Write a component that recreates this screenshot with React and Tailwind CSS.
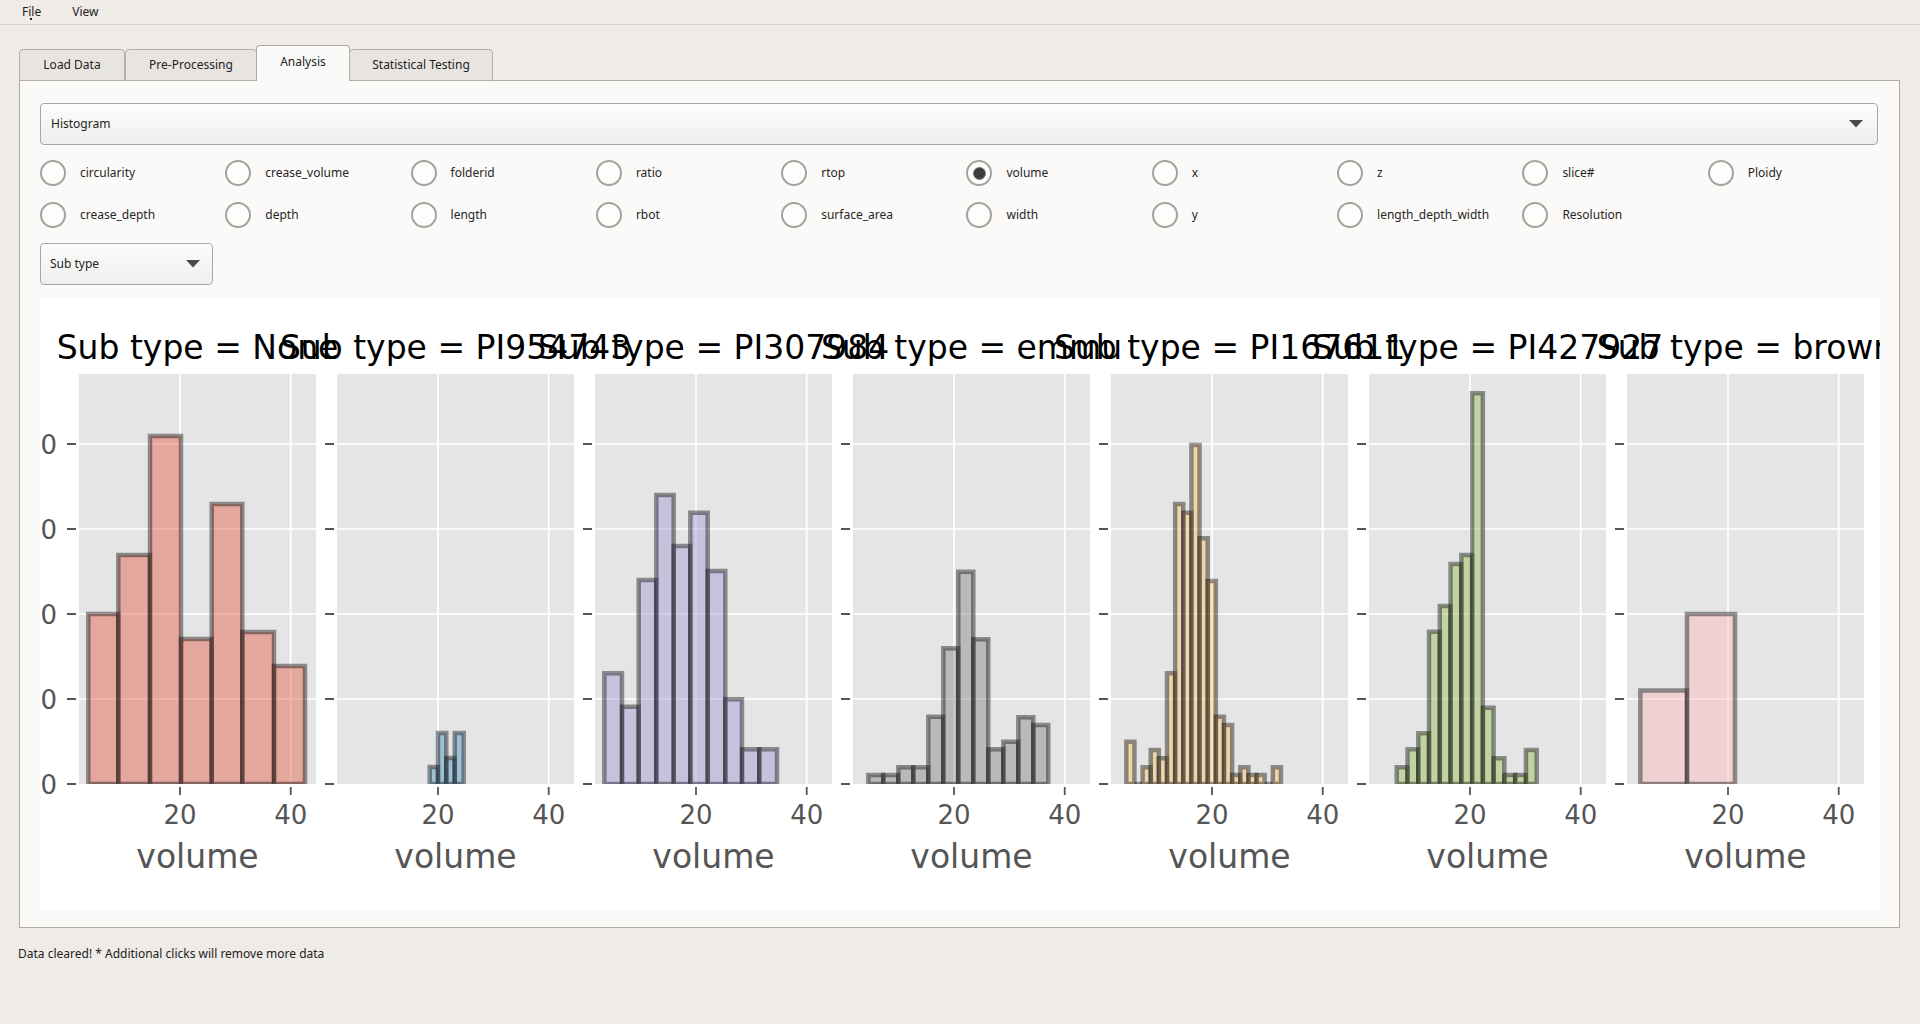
import React from "react";

// figure geometry, in px relative to the white canvas
const BASE = 486;
const PLOT_TOP = 76;
const PLOT_H = 410;
const PLOT_W = 237;
const GRID_Y = [401, 316, 231, 146];
const X_TICKS = [
  { x: 101, label: "20" },
  { x: 211.7, label: "40" },
];

const uniform = (start, width, heights) => ({
  edges: heights.map((_, i) => start + i * width).concat(start + heights.length * width),
  heights,
});

const plots = [
  {
    title: "Sub type = None",
    color: "#E24A33",
    edges: [9.3, 39.3, 71, 102, 132.7, 163.3, 195, 226],
    heights: [170, 229, 348, 145, 280, 152, 118],
  },
  {
    title: "Sub type = PI954743",
    color: "#348ABD",
    edges: [92.7, 101, 109.3, 117.7, 126.7],
    heights: [17, 51, 26, 51],
  },
  {
    title: "Sub type = PI307984",
    color: "#988ED5",
    edges: [9.3, 27, 43.7, 61.3, 78.7, 95.3, 112.7, 130.3, 147, 164.3, 182],
    heights: [110.7, 77.3, 204, 289, 238, 271.3, 213, 84.7, 34.7, 34.7],
  },
  {
    title: "Sub type = emmu",
    color: "#777777",
    ...uniform(15.3, 15, [9, 9, 16.7, 16.7, 67.3, 135.7, 212.3, 144.7, 34.7, 42.3, 66.7, 59]),
  },
  {
    title: "Sub type = PI167611",
    color: "#FBC15E",
    ...uniform(15.3, 8.14, [42.3, 0, 16.7, 34, 25.7, 110.7, 280, 271.3, 339, 245.7, 203, 67.3, 59, 9, 16.7, 9, 9, 0, 16.7]),
  },
  {
    title: "Sub type = PI427927",
    color: "#8EBA42",
    ...uniform(27.7, 10.77, [16.7, 34.7, 50.7, 152.3, 178, 220, 229, 390.7, 76.3, 25.7, 9, 9, 34]),
  },
  {
    title: "Sub type = brown",
    color: "#FFB5B8",
    edges: [13.3, 60, 108],
    heights: [93.5, 170],
  },
];

const row1 = ["circularity", "crease_volume", "folderid", "ratio", "rtop", "volume", "x", "z", "slice#", "Ploidy"];
const row2 = ["crease_depth", "depth", "length", "rbot", "surface_area", "width", "y", "length_depth_width", "Resolution"];

const Arrow = () => (
  <svg width="14" height="8" viewBox="0 0 14 8">
    <polygon points="0,0 14,0 7,7.5" fill="#4a4a4a" />
  </svg>
);

const Radio = ({ label, checked }) => (
  <div className="flex items-center h-[42px]">
    <span className="w-[26px] h-[26px] rounded-full border-2 border-[#a5a19c] bg-[#fdfdfc] flex items-center justify-center shrink-0">
      {checked && <span className="w-[13px] h-[13px] rounded-full bg-[#3d3d3d] border border-[#777]" />}
    </span>
    <span className="ml-[14px] text-[12px] text-[#262626]">{label}</span>
  </div>
);

const Subplot = ({ plot, index }) => {
  const left = 39 + 258 * index;
  const id = `clip${index}`;
  return (
    <g transform={`translate(${left},0)`}>
      <text x={PLOT_W / 2} y={61} textAnchor="middle" fontSize="33" fill="#000">
        {plot.title}
      </text>
      <defs>
        <clipPath id={id}>
          <rect x="0" y={PLOT_TOP} width={PLOT_W} height={PLOT_H} />
        </clipPath>
      </defs>
      <rect x="0" y={PLOT_TOP} width={PLOT_W} height={PLOT_H} fill="#e5e5e5" />
      {GRID_Y.map((y) => (
        <line key={y} x1="0" x2={PLOT_W} y1={y} y2={y} stroke="#fff" strokeWidth="1.7" />
      ))}
      {X_TICKS.map((t) => (
        <line key={t.x} x1={t.x} x2={t.x} y1={PLOT_TOP} y2={BASE} stroke="#fff" strokeWidth="1.7" />
      ))}
      <g clipPath={`url(#${id})`}>
        {plot.heights.map((h, i) => {
          const x0 = plot.edges[i];
          const x1 = plot.edges[i + 1];
          return (
            <path
              key={i}
              d={`M${x0} ${BASE} V${BASE - h} H${x1} V${BASE} Z`}
              fill={plot.color}
              fillOpacity="0.4"
              stroke="#000"
              strokeOpacity="0.4"
              strokeWidth="4.5"
            />
          );
        })}
      </g>
      {[BASE, ...GRID_Y].map((y) => (
        <line key={y} x1="-12" x2="-3" y1={y} y2={y} stroke="#555" strokeWidth="2" />
      ))}
      {index === 0 &&
        [BASE, ...GRID_Y].map((y) => (
          <text key={y} x="-22" y={y + 9.5} textAnchor="end" fontSize="26" fill="#555">
            0
          </text>
        ))}
      {X_TICKS.map((t) => (
        <g key={t.label}>
          <line x1={t.x} x2={t.x} y1={BASE + 3} y2={BASE + 11} stroke="#555" strokeWidth="1.8" />
          <text x={t.x} y="526" textAnchor="middle" fontSize="26" fill="#555">
            {t.label}
          </text>
        </g>
      ))}
      <text x={PLOT_W / 2} y="570" textAnchor="middle" fontSize="33" fill="#555">
        volume
      </text>
    </g>
  );
};

const tabs = [
  { label: "Load Data", w: "w-[106px]" },
  { label: "Pre-Processing", w: "w-[132px]" },
  { label: "Analysis", w: "w-[94px]", active: true },
  { label: "Statistical Testing", w: "w-[144px]" },
];

export default function App() {
  return (
    <div
      className="w-[1920px] h-[1024px] bg-[#efebe7] text-[#232323] overflow-hidden"
      style={{ fontFamily: "'Noto Sans', 'Open Sans', sans-serif" }}
    >
      {/* menu bar */}
      <div className="h-[25px] border-b border-[#d9d5d0] flex items-center text-[12px]">
        <span className="ml-[22px] relative">
          File
          <span className="absolute left-[8px] top-[15px] w-[2px] h-[2px] bg-[#222]" />
        </span>
        <span className="ml-[31px]">View</span>
      </div>

      {/* tabs */}
      <div className="flex items-end pl-[19px] pt-[20px] -mb-px relative z-10 text-[12px]">
        {tabs.map((t) =>
          t.active ? (
            <div
              key={t.label}
              className={`${t.w} h-[36px] pb-[4px] flex items-center justify-center bg-[#fcfaf8] border border-b-0 border-[#aeaaa4] rounded-t-[4px] -mx-px`}
            >
              {t.label}
            </div>
          ) : (
            <div
              key={t.label}
              className={`${t.w} h-[32px] flex items-center justify-center bg-[#e8e5e1] border border-[#b3afa9] rounded-t-[4px]`}
            >
              {t.label}
            </div>
          )
        )}
      </div>

      {/* pane */}
      <div className="ml-[19px] w-[1881px] h-[848px] bg-[#fcfaf8] border border-[#aeaaa4] pl-[20px] pt-[22px]">
        <div className="w-[1838px] h-[42px] rounded-[4px] border border-[#aaa6a1] bg-gradient-to-b from-[#fdfdfd] to-[#efeeec] flex items-center justify-between pl-[10px] pr-[14px] text-[12px]">
          <span>Histogram</span>
          <Arrow />
        </div>

        <div className="mt-[7px] grid grid-cols-[repeat(10,185.3px)]">
          {row1.map((l) => (
            <Radio key={l} label={l} checked={l === "volume"} />
          ))}
          {row2.map((l) => (
            <Radio key={l} label={l} />
          ))}
        </div>

        <div className="mt-[7px] w-[173px] h-[42px] rounded-[4px] border border-[#aaa6a1] bg-gradient-to-b from-[#fdfdfd] to-[#efeeec] flex items-center justify-between pl-[9px] pr-[12px] text-[12px]">
          <span>Sub type</span>
          <Arrow />
        </div>

        <div className="mt-[13px] w-[1840px] h-[612px] bg-white overflow-hidden">
          <svg width="1840" height="612" viewBox="0 0 1840 612" style={{ fontFamily: "'DejaVu Sans', sans-serif" }}>
            {plots.map((p, i) => (
              <Subplot key={p.title} plot={p} index={i} />
            ))}
          </svg>
        </div>
      </div>

      <div className="mt-[17px] ml-[18px] text-[12px]">Data cleared! * Additional clicks will remove more data</div>
    </div>
  );
}
